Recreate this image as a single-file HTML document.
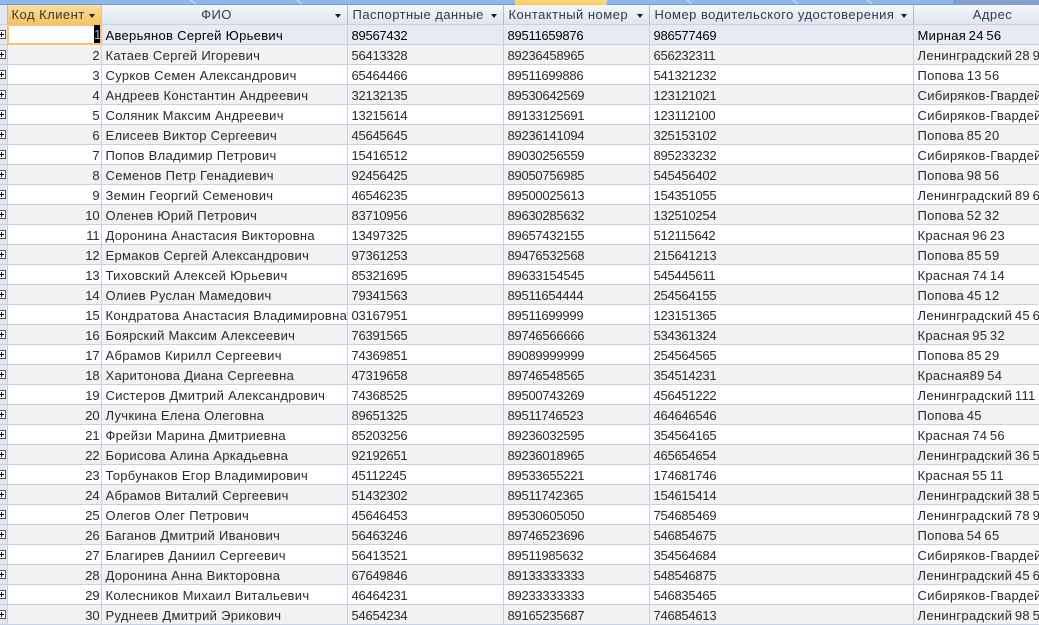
<!DOCTYPE html>
<html><head><meta charset="utf-8"><style>
html,body{margin:0;padding:0;width:1039px;height:625px;overflow:hidden;background:#fff}
body{position:relative;font-family:"Liberation Sans",sans-serif;font-size:13px;color:#2a2a2a}
#top{position:absolute;left:0;top:0;width:1039px;height:5px;background:#8fb8ea;border-bottom:1px solid #6f9fd8;box-sizing:border-box}
#tab{position:absolute;left:515px;top:0;width:92px;height:5px;background:linear-gradient(#fbd97e,#fcc862)}
#tabr{position:absolute;left:953px;top:0;width:86px;height:5px;background:#7f9fcf}
#sl{position:absolute;left:0;top:0}
table{position:absolute;left:0;top:5px;border-collapse:collapse;table-layout:fixed;width:1039px}
th{height:19px;padding:0;font-weight:normal;font-size:13px;letter-spacing:.47px;color:#2b3c50;background:linear-gradient(#f4f6fa,#dfe5ee);border-right:1px solid #a9bfdc;border-bottom:1px solid #c5d2e4;position:relative;text-align:left;overflow:hidden;white-space:nowrap}
th.c{text-align:center}
th.l{padding-left:5px}
th i{position:absolute;right:6px;top:9px;width:0;height:0;border:3.5px solid transparent;border-top:4px solid #222;border-bottom:0}
th.sel{background:linear-gradient(#fbdf9d,#f6c264);color:#3b3a30;padding-left:4px;border-right:1px solid #f0c070}
td{height:17px;padding:2px 4px 0;border-right:1px solid #c5d2e6;border-bottom:1px solid #c5d2e6;letter-spacing:.3px;white-space:nowrap;overflow:hidden;line-height:17px}
td.n{text-align:right;padding:2px 1px 0 0;letter-spacing:-.1px}
td:nth-child(4),td:nth-child(5),td:nth-child(6){letter-spacing:-.25px}
td:nth-child(7){word-spacing:-1.3px}
td.s{padding:0;height:19px;background:#e3e8f0;position:relative;border-right:1px solid #c5d2e6}
td.s b{position:absolute;left:-3px;top:5px;width:7px;height:7px;border:1px solid #555;background:#fff;box-sizing:content-box}
td.s b:before{content:"";position:absolute;left:1px;top:3px;width:5px;height:1px;background:#000}
td.s b:after{content:"";position:absolute;left:3px;top:1px;width:1px;height:5px;background:#000}
tr:nth-child(even) td:not(.s){background:#f2f2f2}
tr:nth-child(odd) td:not(.s){background:#fff}
tr.a td:not(.s){background:#e7eaf3!important;color:#000}
tr.a td.n{background:#fff!important;position:relative}
#cur{position:absolute;left:7px;top:24px;width:95px;height:21px;border:2px solid #fcc06a;box-sizing:border-box}
#hl{position:absolute;left:94px;top:25px;width:6px;height:18px;background:#000;color:#7cc0ff;font-size:13px;line-height:19px;text-align:center}
</style></head><body>
<div id="top"></div><div id="tab"></div><div id="tabr"></div>
<svg id="sl" width="1039" height="5" fill="none" stroke="#d3e3f7" stroke-width="1"><path d="M190 0l6 4M297 0l5 4M687 0l5 4M793 0l5 4M867 0l5 4"/></svg>
<table>
<colgroup><col style="width:7px"><col style="width:94px"><col style="width:246px"><col style="width:156px"><col style="width:146px"><col style="width:264px"><col style="width:126px"></colgroup>
<thead><tr><th style="background:#e3e8f0"></th><th class="sel">Код Клиент<i></i></th><th class="c" style="padding-right:15px">ФИО<i></i></th><th class="l">Паспортные данные<i></i></th><th class="l">Контактный номер<i></i></th><th class="l">Номер водительского удостоверения<i></i></th><th class="c" style="padding-left:33px">Адрес</th></tr></thead>
<tbody>
<tr class="a"><td class="s"><b></b></td><td class="n"></td><td>Аверьянов Сергей Юрьевич</td><td>89567432</td><td>89511659876</td><td>986577469</td><td>Мирная 24 56</td></tr>
<tr><td class="s"><b></b></td><td class="n">2</td><td>Катаев Сергей Игоревич</td><td>56413328</td><td>89236458965</td><td>656232311</td><td>Ленинградский 28 9</td></tr>
<tr><td class="s"><b></b></td><td class="n">3</td><td>Сурков Семен Александрович</td><td>65464466</td><td>89511699886</td><td>541321232</td><td>Попова 13 56</td></tr>
<tr><td class="s"><b></b></td><td class="n">4</td><td>Андреев Константин Андреевич</td><td>32132135</td><td>89530642569</td><td>123121021</td><td>Сибиряков-Гвардей</td></tr>
<tr><td class="s"><b></b></td><td class="n">5</td><td>Соляник Максим Андреевич</td><td>13215614</td><td>89133125691</td><td>123112100</td><td>Сибиряков-Гвардей</td></tr>
<tr><td class="s"><b></b></td><td class="n">6</td><td>Елисеев Виктор Сергеевич</td><td>45645645</td><td>89236141094</td><td>325153102</td><td>Попова 85 20</td></tr>
<tr><td class="s"><b></b></td><td class="n">7</td><td>Попов Владимир Петрович</td><td>15416512</td><td>89030256559</td><td>895233232</td><td>Сибиряков-Гвардей</td></tr>
<tr><td class="s"><b></b></td><td class="n">8</td><td>Семенов Петр Генадиевич</td><td>92456425</td><td>89050756985</td><td>545456402</td><td>Попова 98 56</td></tr>
<tr><td class="s"><b></b></td><td class="n">9</td><td>Земин Георгий Семенович</td><td>46546235</td><td>89500025613</td><td>154351055</td><td>Ленинградский 89 6</td></tr>
<tr><td class="s"><b></b></td><td class="n">10</td><td>Оленев Юрий Петрович</td><td>83710956</td><td>89630285632</td><td>132510254</td><td>Попова 52 32</td></tr>
<tr><td class="s"><b></b></td><td class="n">11</td><td>Доронина Анастасия Викторовна</td><td>13497325</td><td>89657432155</td><td>512115642</td><td>Красная 96 23</td></tr>
<tr><td class="s"><b></b></td><td class="n">12</td><td>Ермаков Сергей Александрович</td><td>97361253</td><td>89476532568</td><td>215641213</td><td>Попова 85 59</td></tr>
<tr><td class="s"><b></b></td><td class="n">13</td><td>Тиховский Алексей Юрьевич</td><td>85321695</td><td>89633154545</td><td>545445611</td><td>Красная 74 14</td></tr>
<tr><td class="s"><b></b></td><td class="n">14</td><td>Олиев Руслан Мамедович</td><td>79341563</td><td>89511654444</td><td>254564155</td><td>Попова 45 12</td></tr>
<tr><td class="s"><b></b></td><td class="n">15</td><td>Кондратова Анастасия Владимировна</td><td>03167951</td><td>89511699999</td><td>123151365</td><td>Ленинградский 45 6</td></tr>
<tr><td class="s"><b></b></td><td class="n">16</td><td>Боярский Максим Алексеевич</td><td>76391565</td><td>89746566666</td><td>534361324</td><td>Красная 95 32</td></tr>
<tr><td class="s"><b></b></td><td class="n">17</td><td>Абрамов Кирилл Сергеевич</td><td>74369851</td><td>89089999999</td><td>254564565</td><td>Попова 85 29</td></tr>
<tr><td class="s"><b></b></td><td class="n">18</td><td>Харитонова Диана Сергеевна</td><td>47319658</td><td>89746548565</td><td>354514231</td><td>Красная89 54</td></tr>
<tr><td class="s"><b></b></td><td class="n">19</td><td>Систеров Дмитрий Александрович</td><td>74368525</td><td>89500743269</td><td>456451222</td><td>Ленинградский 111</td></tr>
<tr><td class="s"><b></b></td><td class="n">20</td><td>Лучкина Елена Олеговна</td><td>89651325</td><td>89511746523</td><td>464646546</td><td>Попова 45</td></tr>
<tr><td class="s"><b></b></td><td class="n">21</td><td>Фрейзи Марина Дмитриевна</td><td>85203256</td><td>89236032595</td><td>354564165</td><td>Красная 74 56</td></tr>
<tr><td class="s"><b></b></td><td class="n">22</td><td>Борисова Алина Аркадьевна</td><td>92192651</td><td>89236018965</td><td>465654654</td><td>Ленинградский 36 5</td></tr>
<tr><td class="s"><b></b></td><td class="n">23</td><td>Торбунаков Егор Владимирович</td><td>45112245</td><td>89533655221</td><td>174681746</td><td>Красная 55 11</td></tr>
<tr><td class="s"><b></b></td><td class="n">24</td><td>Абрамов Виталий Сергеевич</td><td>51432302</td><td>89511742365</td><td>154615414</td><td>Ленинградский 38 5</td></tr>
<tr><td class="s"><b></b></td><td class="n">25</td><td>Олегов Олег Петрович</td><td>45646453</td><td>89530605050</td><td>754685469</td><td>Ленинградский 78 9</td></tr>
<tr><td class="s"><b></b></td><td class="n">26</td><td>Баганов Дмитрий Иванович</td><td>56463246</td><td>89746523696</td><td>546854675</td><td>Попова 54 65</td></tr>
<tr><td class="s"><b></b></td><td class="n">27</td><td>Благирев Даниил Сергеевич</td><td>56413521</td><td>89511985632</td><td>354564684</td><td>Сибиряков-Гвардей</td></tr>
<tr><td class="s"><b></b></td><td class="n">28</td><td>Доронина Анна Викторовна</td><td>67649846</td><td>89133333333</td><td>548546875</td><td>Ленинградский 45 6</td></tr>
<tr><td class="s"><b></b></td><td class="n">29</td><td>Колесников Михаил Витальевич</td><td>46464231</td><td>89233333333</td><td>546835465</td><td>Сибиряков-Гвардей</td></tr>
<tr><td class="s"><b></b></td><td class="n">30</td><td>Руднеев Дмитрий Эрикович</td><td>54654234</td><td>89165235687</td><td>746854613</td><td>Ленинградский 98 5</td></tr>
</tbody></table>
<div id="cur"></div><div id="hl">1</div>
</body></html>
